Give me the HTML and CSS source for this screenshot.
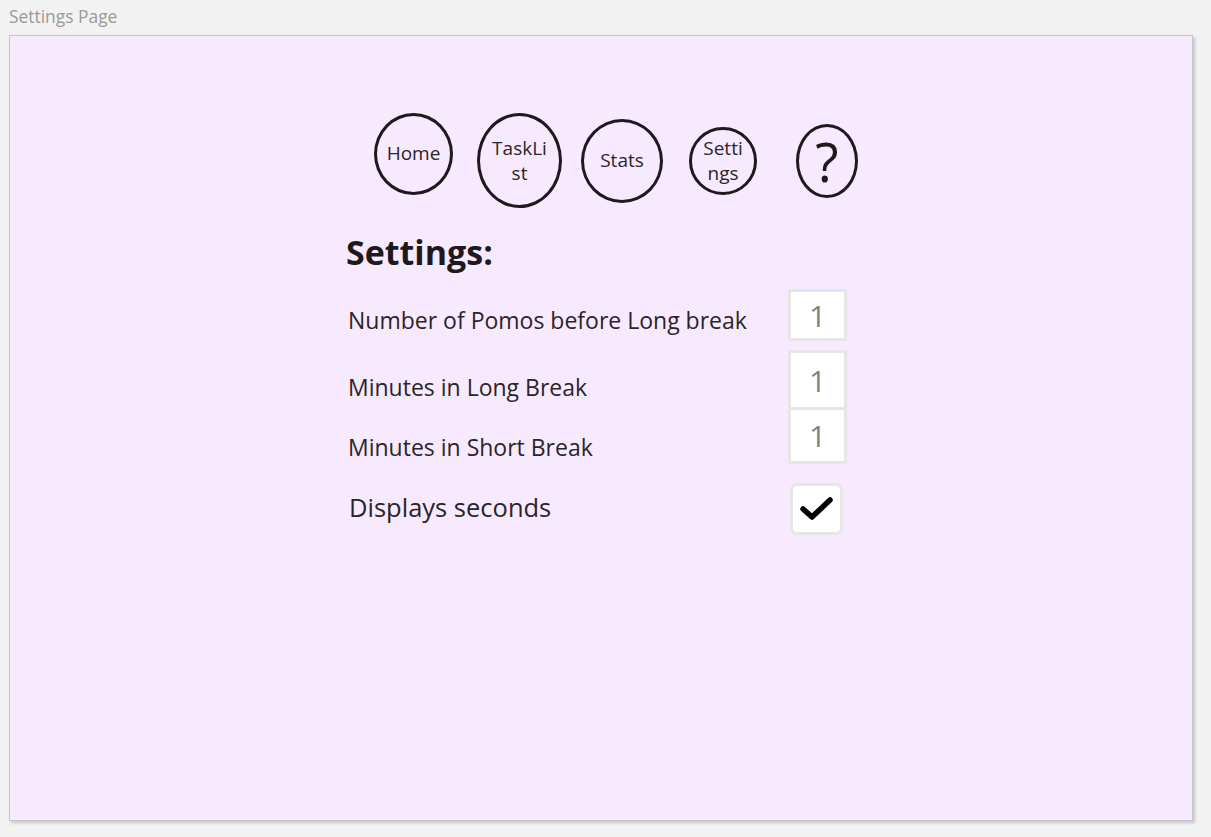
FILE: index.html
```html
<!DOCTYPE html>
<html>
<head>
<meta charset="utf-8">
<link rel="stylesheet" href="styles.css">
</head>
<body>
<div class="page-title">Settings Page</div>
<div class="frame">
  <div class="content">
    <nav class="nav">
      <div class="circle c-home"><span>Home</span></div>
      <div class="circle c-task"><span>TaskLi<wbr>st</span></div>
      <div class="circle c-stats"><span>Stats</span></div>
      <div class="circle c-settings"><span>Setti<wbr>ngs</span></div>
      <div class="circle c-help"><span>?</span></div>
    </nav>
    <h1 class="heading">Settings:</h1>
    <div class="settings">
      <div class="row row1">
        <div class="label">Number of Pomos before Long break</div>
        <div class="box">1</div>
      </div>
      <div class="row row2">
        <div class="label">Minutes in Long Break</div>
        <div class="box tall">1</div>
      </div>
      <div class="row row3">
        <div class="label">Minutes in Short Break</div>
        <div class="box mid">1</div>
      </div>
      <div class="row row4">
        <div class="label big">Displays seconds</div>
        <div class="check">
          <svg width="34" height="26" viewBox="0 0 34 26"><polyline points="3,13 12,21 30,4" fill="none" stroke="#000" stroke-width="5.5" stroke-linecap="round" stroke-linejoin="round"/></svg>
        </div>
      </div>
    </div>
  </div>
</div>
</body>
</html>
```
FILE: styles.css
```css
* { box-sizing: border-box; }
html, body { margin: 0; padding: 0; }
body {
  background: #f2f2f2;
  font-family: "Open Sans", "Liberation Sans", sans-serif;
  width: 1211px;
  height: 837px;
  overflow: hidden;
}
.page-title {
  color: #9a9a9a;
  font-size: 17.4px;
  line-height: 22px;
  padding: 5px 0 0 9px;
  height: 35px;
}
.frame {
  margin-left: 9px;
  width: 1184px;
  height: 786px;
  background: #f8eafe;
  border: 1px solid #c9c4cc;
  box-shadow: 2px 2px 3px rgba(0,0,0,0.18);
}
.content {
  padding: 77px 0 0 336px;
}
.nav {
  display: flex;
  align-items: center;
  height: 95px;
  margin-left: 28px;
}
.circle {
  border: 3.5px solid #1e191d;
  border-radius: 50%;
  display: flex;
  align-items: center;
  justify-content: center;
  text-align: center;
  color: #2a2529;
  font-size: 19px;
  line-height: 25px;
  flex: none;
}
.c-home { width: 79px; height: 82px; margin-bottom: 14px; }
.c-task { width: 85px; height: 95px; margin-left: 24px; }
.c-task span { width: 60px; }
.c-stats { width: 82px; height: 84px; margin-left: 19px; }
.c-settings { width: 68px; height: 68px; margin-left: 26px; }
.c-settings span { width: 46px; }
.c-help { width: 62px; height: 74px; margin-left: 39px; font-size: 54px; line-height: 60px; color: #1e191d; }
.heading {
  margin: 24px 0 0 0;
  font-size: 34px;
  line-height: 40px;
  font-weight: 700;
  color: #1e191d;
  height: 57px;
}
.settings {
  display: flex;
  flex-direction: column;
}
.row {
  display: flex;
  align-items: flex-start;
}
.label {
  width: 442px;
  font-size: 23px;
  line-height: 30px;
  color: #2a2529;
  padding-left: 2px;
  white-space: nowrap;
}
.row1 .label { margin-top: 16px; }
.row2 { margin-top: 9px; }
.row2 .label { margin-top: 22px; }
.row3 .label { margin-top: 22px; }
.row4 { margin-top: 19px; }
.row4 .label { margin-top: 8px; }
.label.big { font-size: 25.5px; line-height: 32px; padding-left: 3px; }
.box {
  width: 59px;
  height: 52px;
  background: #fff;
  border: 3px solid #e6e6e6;
  display: flex;
  align-items: center;
  justify-content: center;
  color: #808080;
  font-size: 30px;
  font-weight: 400;
}
.box.tall { height: 60px; }
.box.mid { height: 57px; margin-top: -3px; }
.check {
  width: 53px;
  height: 52px;
  margin-left: 2px;
  background: #fff;
  border: 3px solid #e6e6e6;
  border-radius: 7px;
  display: flex;
  align-items: center;
  justify-content: center;
}
```
